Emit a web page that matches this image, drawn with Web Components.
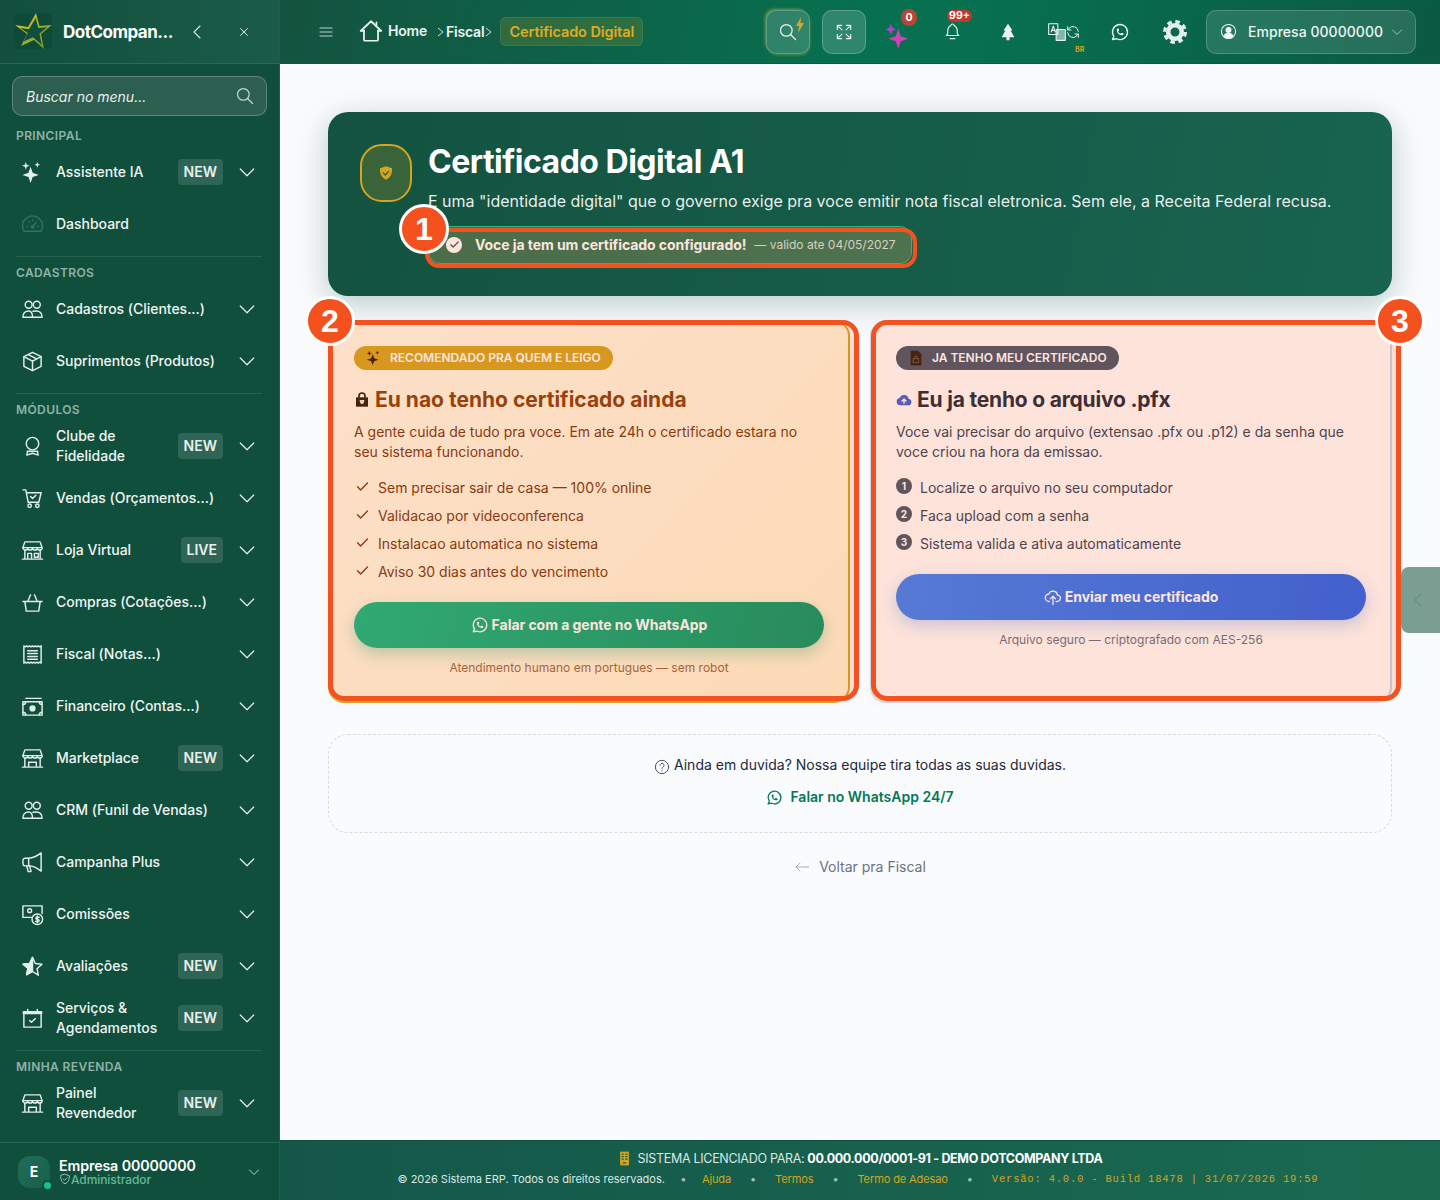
<!DOCTYPE html>
<html lang="pt-BR">
<head>
<meta charset="utf-8">
<title>Certificado Digital</title>
<style>
  html, body { margin: 0; height: 1200px; overflow: hidden; background: #fafbfd; font-family: Inter, "Liberation Sans", sans-serif; }
</style>
</head>
<body>
<dc-app>
  <dc-sidebar slot="sidebar"></dc-sidebar>
  <dc-topbar slot="topbar"></dc-topbar>
  <dc-hero>
    <span slot="title">Certificado Digital A1</span>
    <span slot="text">E uma "identidade digital" que o governo exige pra voce emitir nota fiscal eletronica. Sem ele, a Receita Federal recusa.</span>
    <span slot="status">Voce ja tem um certificado configurado!</span>
    <span slot="valid">— valido ate 04/05/2027</span>
  </dc-hero>
  <dc-cards>
    <dc-option-card variant="gold" number="2" tagicon="sparkles" titleicon="lockbag" button="Falar com a gente no WhatsApp" btnicon="whatsapp" note="Atendimento humano em portugues — sem robot">
      <span slot="tag">RECOMENDADO PRA QUEM E LEIGO</span>
      <span slot="title">Eu nao tenho certificado ainda</span>
      <span slot="desc">A gente cuida de tudo pra voce. Em ate 24h o certificado estara no seu sistema funcionando.</span>
      <dc-list-row mark="check">Sem precisar sair de casa — 100% online</dc-list-row>
      <dc-list-row mark="check">Validacao por videoconferenca</dc-list-row>
      <dc-list-row mark="check">Instalacao automatica no sistema</dc-list-row>
      <dc-list-row mark="check">Aviso 30 dias antes do vencimento</dc-list-row>
    </dc-option-card>
    <dc-option-card variant="blue" number="3" tagicon="filelock" titleicon="cloudfill" button="Enviar meu certificado" btnicon="cloudup" note="Arquivo seguro — criptografado com AES-256">
      <span slot="tag">JA TENHO MEU CERTIFICADO</span>
      <span slot="title">Eu ja tenho o arquivo .pfx</span>
      <span slot="desc">Voce vai precisar do arquivo (extensao .pfx ou .p12) e da senha que voce criou na hora da emissao.</span>
      <dc-list-row mark="1">Localize o arquivo no seu computador</dc-list-row>
      <dc-list-row mark="2">Faca upload com a senha</dc-list-row>
      <dc-list-row mark="3">Sistema valida e ativa automaticamente</dc-list-row>
    </dc-option-card>
  </dc-cards>
  <dc-help></dc-help>
  <dc-footer slot="footer"></dc-footer>
</dc-app>

<script>
// paths are all on a 24x24 box, stroke unless the name is in FILLED
const ICONS = {
  sparkles: '<path d="M10 6l2.200 6.300L18.500 14.500l-6.300 2.200L10 23l-2.200-6.300L1.500 14.500l6.300-2.200z"/><path d="M5 1l1 3 3 1-3 1-1 3-1-3-3-1 3-1z"/><path d="M17 1l.8 2.200L20 4l-2.200.8L17 7l-.8-2.200L14 4l2.200-.8z"/>',
  gauge: '<path d="M3 19a10.500 10.500 0 1 1 18 0z"/><path d="M12 14l4-4M6 14h1M17 14h1M8 9l.7.7M12 7v1"/><circle cx="12" cy="14.500" r="1.200"/>',
  users: '<circle cx="8" cy="7" r="3.600"/><circle cx="16.500" cy="7" r="3.600"/><path d="M2 20c0-4 2.500-6.500 6-6.500S12 16 12 20zM12.500 13.800c.9-.3 2.400-.3 3.500-.3 3.500 0 6 2.500 6 6.500H12"/>',
  box: '<path d="M12 2.500l9 4.500v10l-9 4.500-9-4.500V7z"/><path d="M3 7l9 4.500L21 7M12 11.500v10M7.500 4.800l9 4.500"/>',
  award: '<circle cx="12" cy="9" r="6.500"/><path d="M6.500 17h11M7 17l-1 4 6-2 6 2-1-4"/>',
  cart: '<path d="M2 3h3l2.500 13h11L21 6H5.500"/><circle cx="9" cy="19.500" r="1.800"/><circle cx="17" cy="19.500" r="1.800"/><path d="M10 10l2 2 3.500-3.500"/>',
  store: '<path d="M4 3h16l2 6H2z"/><path d="M2 9a2.500 2.500 0 0 0 5 0 2.500 2.500 0 0 0 5 0 2.500 2.500 0 0 0 5 0 2.500 2.500 0 0 0 5 0"/><path d="M4 12v9h16v-9M1.500 21h21M7 15h4v6H7zM14 15h4v4h-4z"/>',
  market: '<path d="M4 3h16l2 6H2z"/><path d="M2 9a2.500 2.500 0 0 0 5 0 2.500 2.500 0 0 0 5 0 2.500 2.500 0 0 0 5 0 2.500 2.500 0 0 0 5 0"/><path d="M4 12v9h16v-9M1.500 21h21M8 16h8v5H8z"/>',
  basket: '<path d="M2 11h20M4 11l1.500 10h13L20 11M7 11l3-7M17 11l-3-7"/>',
  receipt: '<path d="M3 3l1.500 1L6 3l1.500 1L9 3l1.500 1L12 3l1.500 1L15 3l1.500 1L18 3l1.500 1L21 3v18l-1.500-1-1.500 1-1.500-1-1.500 1-1.500-1-1.500 1-1.500-1L9 21l-1.500-1L6 21l-1.500-1L3 21z"/><path d="M7 8h10M7 11h10M7 14h10M7 17h10"/>',
  cash: '<path d="M5 3.500h16M2 7h20v14H2z"/><circle cx="12" cy="14" r="2.500" fill="currentColor"/><path d="M2 10c2 0 3-1 3-3M22 10c-2 0-3-1-3-3M2 18c2 0 3 1 3 3M22 18c-2 0-3 1-3 3"/>',
  megaphone: '<path d="M21 2v19c-5-4-9-5.500-13-5.500H4a2.500 2.500 0 0 1-2-2.500V10a2.500 2.500 0 0 1 2-2.500h4C12 7.500 16 6 21 2z"/><path d="M8 7.500v8M6 15.500l1.500 6h3l-1.500-6"/>',
  commission: '<path d="M2 3h20v8M11 15H2V3"/><circle cx="9" cy="8" r="2"/><circle cx="17" cy="17" r="5.500"/><path d="M19 15.200c-.5-.6-3.500-1-3.500.7s3.500 1 3.500 2.500-3 1.300-3.700.6M17 13.500v7"/>',
  star: '<path d="M12 2.500l2.900 6.300 6.900.8-5.100 4.700 1.400 6.800L12 17.200l-6.100 3.400 1.400-6.800L2.200 9.600l6.900-.8z"/><path d="M12 2.500v14.700l-6.100 3.400 1.400-6.800L2.200 9.600l6.900-.8z" fill="currentColor"/>',
  calendar: '<path d="M3 5h18v16H3zM7 2.500V6M17 2.500V6"/><path d="M3 6h18" stroke-width="3"/><path d="M9 14l2 2 4-4"/>',
  menu: '<path d="M3 6h18M3 12h18M3 18h18"/>',
  home: '<path d="M5.500 12H2.500L12 3l9.500 9h-3"/><path d="M5.500 11.500V20a1 1 0 0 0 1 1h11a1 1 0 0 0 1-1v-8.500M17 4v3"/>',
  search: '<circle cx="10" cy="10" r="7"/><path d="M21 21l-6-6"/>',
  expand: '<path d="M4 9V4h5M4 4l5.500 5.500M20 9V4h-5M20 4l-5.500 5.500M4 15v5h5M4 20l5.500-5.500M20 15v5h-5M20 20l-5.500-5.500"/>',
  bell: '<path d="M10 4.500a2 2 0 1 1 4 0 7 7 0 0 1 4 6v3.500a4 4 0 0 0 2 3H4a4 4 0 0 0 2-3v-3.500a7 7 0 0 1 4-6z"/><path d="M9 21h6"/>',
  tree: '<path d="M12 1l6 9h-2.500l5 9H14v4h-4v-4H3.500l5-9H6z"/>',
  translate: '<path d="M2 2h11v13H2z"/><path d="M5 12l2.500-7 2.500 7M6 10h3" stroke-width="1.300"/><path d="M11 9h11v13H11z" fill="currentColor" fill-opacity=".55"/>',
  refresh: '<path d="M20 11a8 8 0 0 0-14-4.500L4 9M4 4v5h5M4 13a8 8 0 0 0 14 4.500l2-2.500M20 20v-5h-5"/>',
  whatsapp: '<path d="M3 21l1.650-3.800a9 9 0 1 1 3.400 2.900L3 21"/><path d="M9 10a.5.5 0 0 0 1 0V9a.5.5 0 0 0-1 0v1a5 5 0 0 0 5 5h1a.5.5 0 0 0 0-1h-1a.5.5 0 0 0 0 1"/>',
  usercircle: '<circle cx="12" cy="12" r="10"/><circle cx="12" cy="10" r="3.500" fill="currentColor"/><path d="M5.500 19c1-3.500 3-4.500 6.500-4.500s5.500 1 6.500 4.500a10 10 0 0 1-13 0z" fill="currentColor"/>',
  chevdown: '<path d="M3 8l9 9 9-9"/>',
  chevleft: '<path d="M15 3l-9 9 9 9"/>',
  close: '<path d="M6 6l12 12M18 6L6 18"/>',
  check: '<path d="M4 12.500l5 5L20 6.500"/>',
  question: '<circle cx="12" cy="12" r="10"/><path d="M9 9.500a3 3 0 1 1 4.500 2.600c-1 .6-1.500 1.200-1.500 2.400M12 17.500v.5"/>',
  arrowleft: '<path d="M22 12H3M9 6l-6 6 6 6"/>',
  cloudup: '<path d="M7 18a5 5 0 0 1-.5-10 6 6 0 0 1 11.500 1.500 4.200 4.200 0 0 1-1 8.500h-1"/><path d="M12 22V11M8.500 14.500L12 11l3.500 3.500"/>',
  shieldline: '<path d="M12 2.500l8.500 3c.5 7-1.500 13-8.500 16-7-3-9-9-8.500-16z"/><path d="M8.500 12l2.500 2.500 4.500-4.500"/>',
  building: '<path d="M5 1h14v22H5z" fill="currentColor" stroke="none"/><path d="M8 5h2M14 5h2M8 9h2M14 9h2M8 13h2M14 13h2M10 19h4" stroke="#16604c" stroke-width="2"/>',
  lockbag: '<path d="M3 8h18v14H3z" fill="currentColor" stroke="none"/><path d="M7.500 8V6a4.500 4.500 0 0 1 9 0v2" stroke-width="2.500"/><path d="M8.500 12h7c0 4-1.500 5.500-3.500 6.500-2-1-3.500-2.500-3.500-6.500z" fill="#fde4c8" stroke="none"/>',
  cloudfill: '<path d="M6.500 20a5.500 5.500 0 0 1-1-10.900 7 7 0 0 1 13.400 1 5 5 0 0 1-.4 9.900z" fill="currentColor" stroke="none"/><path d="M12 17v-6M9 13.500l3-3 3 3" stroke="#fff" stroke-width="2"/>',
  filelock: '<path d="M4 1h11l5 5v17H4z" fill="currentColor" stroke="none"/><path d="M8 13h8v6H8zM10 13v-2a2 2 0 0 1 4 0v2" stroke="#6d5d63" stroke-width="1.300" fill="none"/>',
  shieldfill: '<path d="M12 2l9 3c.5 8-2 14-9 17-7-3-9.500-9-9-17z" fill="currentColor" stroke="none"/><path d="M8 12l3 3 5-5.500" stroke="#2d5c3e" stroke-width="1.800"/>'
};
const FILLED = new Set(['sparkles', 'tree']);

class DcIcon extends HTMLElement {
  connectedCallback() {
    const name = this.getAttribute('name');
    const size = this.getAttribute('size') || 20;
    const weight = this.getAttribute('weight') || 1.5;
    const paint = FILLED.has(name) ? 'fill="currentColor" stroke="none"' : `fill="none" stroke="currentColor" stroke-width="${weight}" stroke-linecap="round" stroke-linejoin="round"`;
    this.attachShadow({ mode: 'open' }).innerHTML = `
      <style>:host { display: inline-flex; flex: none; } svg { display: block; }</style>
      <svg width="${size}" height="${size}" viewBox="0 0 24 24" ${paint}>${ICONS[name] || ''}</svg>`;
  }
}
customElements.define('dc-icon', DcIcon);

class DcApp extends HTMLElement {
  constructor() {
    super();
    this.attachShadow({ mode: 'open' }).innerHTML = `
      <style>
        :host { display: grid; grid-template-columns: 280px 1fr; height: 1200px; position: relative; overflow: hidden; }
        .side { grid-row: 1 / 3; min-width: 0; }
        .col { display: flex; flex-direction: column; height: 1200px; min-width: 0; }
        main { flex: 1; padding: 48px 48px 0; min-height: 0; }
        .handle { position: absolute; right: 0; top: 567px; width: 39px; height: 66px; background: #7a9e92; border-radius: 8px 0 0 8px; color: #64877c; display: flex; align-items: center; padding-left: 10px; box-sizing: border-box; }
      </style>
      <div class="side"><slot name="sidebar"></slot></div>
      <div class="col">
        <slot name="topbar"></slot>
        <main><slot></slot></main>
        <slot name="footer"></slot>
      </div>
      <div class="handle"><dc-icon name="chevleft" size="16"></dc-icon></div>`;
  }
}
customElements.define('dc-app', DcApp);

class DcNavItem extends HTMLElement {
  constructor() {
    super();
    this.attachShadow({ mode: 'open' });
  }
  connectedCallback() {
    const icon = this.getAttribute('icon');
    const badge = this.getAttribute('badge');
    const noChev = this.hasAttribute('nochevron');
    const dim = this.hasAttribute('dim');
    this.shadowRoot.innerHTML = `
      <style>
        :host { display: flex; align-items: center; height: 52px; padding: 0 22px 0 21px; color: #eef5f2; font-size: 14px; font-weight: 550; line-height: 20px; letter-spacing: -.02px; }
        .ic { width: 35px; flex: none; display: flex; color: ${dim ? '#2a7560' : '#e4eeea'}; }
        .lb { flex: 1; min-width: 0; }
        .badge { background: rgba(255,255,255,.13); border-radius: 4px; height: 26px; line-height: 26px; padding: 0 6px; font-size: 14px; font-weight: 600; color: #e8f0ed; letter-spacing: 0; }
        .chev { margin-left: 15px; width: 18px; margin-right: 1px; color: #e4eeea; display: flex; }
      </style>
      <span class="ic"><dc-icon name="${icon}" size="23" weight="1.500"></dc-icon></span>
      <span class="lb"><slot></slot></span>
      ${badge ? `<span class="badge">${badge}</span>` : ''}
      ${noChev ? '' : '<span class="chev"><dc-icon name="chevdown" size="18" weight="1.600"></dc-icon></span>'}`;
  }
}
customElements.define('dc-nav-item', DcNavItem);

class DcNavSection extends HTMLElement {
  constructor() {
    super();
    this.attachShadow({ mode: 'open' }).innerHTML = `
      <style>
        :host { display: block; padding-top: 8px; margin-top: 6px; position: relative; }
        :host([first]) { padding-top: 11px; margin-top: 0; }
        :host(:not([first]))::before { content: ""; position: absolute; left: 16px; right: 17px; top: 0; height: 1px; background: rgba(255,255,255,.1); }
        h3 { margin: 0 0 1px; padding: 0 16px; height: 18px; line-height: 18px; font-size: 12px; font-weight: 600; letter-spacing: .4px; color: #8fb3a7; }
      </style>
      <h3></h3>
      <slot></slot>`;
  }
  connectedCallback() {
    this.shadowRoot.querySelector('h3').textContent = this.getAttribute('label');
  }
}
customElements.define('dc-nav-section', DcNavSection);

class DcSidebar extends HTMLElement {
  constructor() {
    super();
    this.attachShadow({ mode: 'open' }).innerHTML = `
      <style>
        :host { display: flex; flex-direction: column; height: 1200px; background: #114f3d; box-sizing: border-box; border-right: 1px solid #1f5e4c; color: #fff; overflow: hidden; }
        .head { height: 64px; flex: none; box-sizing: border-box; display: flex; align-items: center; padding-left: 12px; border-bottom: 1px solid #2a6a56; background: linear-gradient(90deg, #124f3e, #1a5c47); }
        .logo { width: 42px; height: 42px; flex: none; }
        .brand { margin-left: 9px; width: 117px; font-size: 17px; font-weight: 700; letter-spacing: -.5px; white-space: nowrap; }
        .head .ctl { color: #dfe9e5; display: flex; }
        .head .back { margin-left: 10px; }
        .head .x { margin-left: 31px; }
        .search { margin: 12px 12px 0; height: 40px; flex: none; box-sizing: border-box; border: 1px solid rgba(255,255,255,.25); border-radius: 10px; background: #2d5f50; display: flex; align-items: center; padding: 0 11px 0 13px; font-size: 14px; font-style: italic; color: #e8f0ed; justify-content: space-between; }
        .search dc-icon { color: #c3d4ce; }
        nav { flex: 1; min-height: 0; }
        .user { height: 58px; flex: none; display: flex; align-items: center; border-top: 1px solid #2b6553; padding: 0 18px; box-sizing: border-box; position: relative; }
        .avatar { width: 32px; height: 32px; border-radius: 12px; background: linear-gradient(135deg, #206d55, #17604a); display: flex; align-items: center; justify-content: center; font-weight: 700; font-size: 14px; flex: none; position: relative; }
        .avatar::after { content: ""; position: absolute; right: -1px; bottom: -1px; width: 7px; height: 7px; border-radius: 50%; background: #17c088; box-shadow: 0 0 0 2px #114f3d; }
        .who { margin-left: 9px; flex: 1; }
        .name { font-size: 14.2px; font-weight: 600; line-height: 15px; letter-spacing: -.1px; }
        .role { display: flex; align-items: center; font-size: 12px; line-height: 13px; font-weight: 500; color: #62bb96; letter-spacing: -.08px; }
        .role dc-icon { color: #a6cfc0; }
        .user .down { color: #cfe0da; display: flex; margin-right: 1px; }
      </style>
      <div class="head">
        <svg class="logo" viewBox="0 0 42 42">
          <defs><linearGradient id="g" x1="0" y1="0" x2="1" y2="1"><stop offset="0" stop-color="#e8c52a"/><stop offset="1" stop-color="#5f9a2a"/></linearGradient></defs>
          <rect x="2" y="2" width="38" height="36" rx="5" fill="#0f4a39"/>
          <path d="M24 2l3.500 13L40 14 29 23l3 15-10-9-13 6 6-12L3 14l13 2z" fill="url(#g)"/>
          <path d="M23.800 7l2.400 10 9-.7-7.800 6.500 2.300 11-8.700-7.600-9.500 4.400 4.300-8.700-7.800-5 9 1.300z" fill="#114f3d"/>
        </svg>
        <span class="brand">DotCompan...</span>
        <span class="ctl back"><dc-icon name="chevleft" size="16" weight="1.600"></dc-icon></span>
        <span class="ctl x"><dc-icon name="close" size="14" weight="1.700"></dc-icon></span>
      </div>
      <div class="search"><span>Buscar no menu...</span><dc-icon name="search" size="20" weight="1.500"></dc-icon></div>
      <nav>
        <dc-nav-section first label="PRINCIPAL">
          <dc-nav-item icon="sparkles" badge="NEW">Assistente IA</dc-nav-item>
          <dc-nav-item icon="gauge" nochevron dim>Dashboard</dc-nav-item>
        </dc-nav-section>
        <dc-nav-section label="CADASTROS">
          <dc-nav-item icon="users">Cadastros (Clientes...)</dc-nav-item>
          <dc-nav-item icon="box">Suprimentos (Produtos)</dc-nav-item>
        </dc-nav-section>
        <dc-nav-section label="MÓDULOS">
          <dc-nav-item icon="award" badge="NEW">Clube de Fidelidade</dc-nav-item>
          <dc-nav-item icon="cart">Vendas (Orçamentos...)</dc-nav-item>
          <dc-nav-item icon="store" badge="LIVE">Loja Virtual</dc-nav-item>
          <dc-nav-item icon="basket">Compras (Cotações...)</dc-nav-item>
          <dc-nav-item icon="receipt">Fiscal (Notas...)</dc-nav-item>
          <dc-nav-item icon="cash">Financeiro (Contas...)</dc-nav-item>
          <dc-nav-item icon="market" badge="NEW">Marketplace</dc-nav-item>
          <dc-nav-item icon="users">CRM (Funil de Vendas)</dc-nav-item>
          <dc-nav-item icon="megaphone">Campanha Plus</dc-nav-item>
          <dc-nav-item icon="commission">Comissões</dc-nav-item>
          <dc-nav-item icon="star" badge="NEW">Avaliações</dc-nav-item>
          <dc-nav-item icon="calendar" badge="NEW">Serviços &amp; Agendamentos</dc-nav-item>
        </dc-nav-section>
        <dc-nav-section label="MINHA REVENDA">
          <dc-nav-item icon="market" badge="NEW">Painel Revendedor</dc-nav-item>
        </dc-nav-section>
      </nav>
      <div class="user">
        <div class="avatar">E</div>
        <div class="who">
          <div class="name">Empresa 00000000</div>
          <div class="role"><dc-icon name="shieldline" size="12" weight="1.800"></dc-icon>Administrador</div>
        </div>
        <span class="down"><dc-icon name="chevdown" size="12" weight="1.800"></dc-icon></span>
      </div>`;
  }
}
customElements.define('dc-sidebar', DcSidebar);

class DcTopbar extends HTMLElement {
  constructor() {
    super();
    this.attachShadow({ mode: 'open' }).innerHTML = `
      <style>
        :host { display: flex; align-items: center; height: 64px; flex: none; box-sizing: border-box; padding: 0 24px 0 38px; color: #fff; background: linear-gradient(100deg, #14533f 0%, #07704f 50%, #077050 60%, #0b5a43 100%); border-bottom: 1px solid #0d5a45; font-size: 14px; }
        .burger { color: rgba(255,255,255,.72); display: flex; }
        .crumbs { display: flex; align-items: center; margin-left: 24px; font-weight: 600; letter-spacing: -.2px; color: #ecf4f1; }
        .crumbs .home { margin-top: 2px; }
        .crumbs .h { margin: -3px 0 0 4px; }
        .sep { color: #d5e4de; display: flex; }
        .sep.a { margin-left: 9px; }
        .here { margin-left: 6px; height: 29px; box-sizing: border-box; padding: 0 8px; display: flex; align-items: center; border: 1px solid rgba(255,255,255,.08); border-radius: 6px; background: rgba(212,165,32,.17); color: #e0ab1e; font-size: 14.5px; letter-spacing: -.1px; }
        .tools { margin-left: auto; display: flex; align-items: center; gap: 12px; }
        .btn { width: 44px; height: 44px; box-sizing: border-box; border-radius: 10px; border: 1px solid rgba(255,255,255,.22); background: rgba(255,255,255,.16); display: flex; align-items: center; justify-content: center; position: relative; color: #e8f1ee; }
        .btn.glow { box-shadow: -2px -2px 3px -1px rgba(212,190,60,.55), 1px 2px 3px -1px rgba(212,190,60,.4); }
        .bolt { position: absolute; right: 4px; top: 6px; width: 10px; height: 16px; }
        .slot { width: 44px; height: 44px; display: flex; align-items: center; justify-content: center; position: relative; color: #eaf3ef; }
        .first { margin-left: -4px; }
        .count { position: absolute; background: #c0392f; color: #fff; font-size: 10.5px; font-weight: 700; border-radius: 9px; display: flex; align-items: center; justify-content: center; }
        .br { position: absolute; left: 33px; top: 35px; font-size: 7px; font-weight: 700; color: #cfa51c; }
        .company { margin-left: -4px; width: 210px; height: 44px; box-sizing: border-box; border: 1px solid rgba(255,255,255,.2); border-radius: 10px; background: rgba(255,255,255,.12); display: flex; align-items: center; padding: 0 12px 0 13px; font-size: 14px; font-weight: 500; letter-spacing: .04px; color: #eef5f2; }
        .company .nm { margin-left: 11px; flex: 1; white-space: nowrap; }
        .company dc-icon:last-child { color: #bcd0c9; }
      </style>
      <span class="burger"><dc-icon name="menu" size="16" weight="1.500"></dc-icon></span>
      <div class="crumbs">
        <span class="home"><dc-icon name="home" size="26" weight="1.600"></dc-icon></span><span class="h">Home</span>
        <span class="sep a"><svg width="10" height="10" viewBox="0 0 10 10" fill="none" stroke="currentColor" stroke-width="1"><path d="M2 1l5 4-5 4"/></svg></span><span>Fiscal</span>
        <span class="sep"><svg width="10" height="10" viewBox="0 0 10 10" fill="none" stroke="currentColor" stroke-width="1"><path d="M2 1l5 4-5 4"/></svg></span>
        <span class="here">Certificado Digital</span>
      </div>
      <div class="tools">
        <div class="btn glow"><dc-icon name="search" size="20" weight="1.500"></dc-icon>
          <svg class="bolt" viewBox="0 0 10 16"><path d="M6 0L1 9h3l-1 7 6-10H5.500z" fill="#d8a72a"/></svg></div>
        <div class="btn"><dc-icon name="expand" size="20" weight="1.400"></dc-icon></div>
        <div class="slot first">
          <svg width="28" height="30" viewBox="0 0 22 24" style="margin:6px 0 0 2px"><path d="M12 7l2 6 6 2-6 2-2 6-2-6-6-2 6-2z" fill="#d43fb8"/><path d="M6 3l1.300 3.200L10 7.500 7.300 8.800 6 12 4.700 8.800 2 7.500l2.700-1.300z" fill="#b43fd6"/></svg>
          <span class="count" style="left:27px;top:-1px;width:16px;height:17px;background:#b8443a">0</span>
        </div>
        <div class="slot"><dc-icon name="bell" size="19" weight="1.400"></dc-icon>
          <span class="count" style="left:17px;top:0;width:25px;height:12px;border-radius:6px">99+</span></div>
        <div class="slot"><dc-icon name="tree" size="18"></dc-icon></div>
        <div class="slot"><dc-icon name="translate" size="20" weight="1.300"></dc-icon><dc-icon name="refresh" size="16" weight="1.500" style="margin-left:-2px"></dc-icon><span class="br">BR</span></div>
        <div class="slot"><dc-icon name="whatsapp" size="20" weight="1.600"></dc-icon></div>
        <div class="slot" style="padding-right:3px;box-sizing:border-box">
          <svg width="26" height="26" viewBox="0 0 26 26" fill="none" stroke="#e4efeb"><circle cx="13" cy="13" r="6.800" stroke-width="4.600"/><circle cx="13" cy="13" r="10.300" stroke-width="3.400" stroke-dasharray="4.500 3.590"/></svg>
        </div>
        <div class="company"><dc-icon name="usercircle" size="17" weight="1.500"></dc-icon><span class="nm">Empresa 00000000</span><dc-icon name="chevdown" size="12" weight="1.600"></dc-icon></div>
      </div>`;
  }
}
customElements.define('dc-topbar', DcTopbar);

// orange highlight box with a numbered dot, sits over whatever its parent holds
class DcCallout extends HTMLElement {
  connectedCallback() {
    const n = this.getAttribute('number');
    this.attachShadow({ mode: 'open' }).innerHTML = `
      <style>
        :host { position: absolute; display: block; box-sizing: border-box; pointer-events: none; border: var(--w, 5px) solid #f4511e; border-radius: var(--r, 16px); background: rgba(244,81,30,.15); z-index: 2; }
        .dot { position: absolute; width: 44px; height: 44px; left: var(--dx); top: var(--dy); border-radius: 50%; background: #f4511e; border: 3px solid #fff; color: #fff; font: 700 32px/44px "Liberation Sans", sans-serif; text-align: center; }
      </style>
      <div class="dot">${n}</div>`;
  }
}
customElements.define('dc-callout', DcCallout);

class DcHero extends HTMLElement {
  constructor() {
    super();
    this.attachShadow({ mode: 'open' }).innerHTML = `
      <style>
        :host { display: flex; height: 184px; box-sizing: border-box; padding: 32px; border-radius: 20px; color: #fff; background: linear-gradient(100deg, #135340 0%, #186450 100%); box-shadow: 0 8px 32px rgba(15,80,62,.28); position: relative; }
        .seal { width: 52px; height: 58px; box-sizing: border-box; flex: none; border: 2px solid #d4a520; border-radius: 22px; background: rgba(212,165,32,.2); display: flex; align-items: center; justify-content: center; color: #d4a520; }
        .body { margin-left: 16px; min-width: 0; position: relative; flex: 1; }
        h1 { margin: 0; padding-top: 1px; height: 34px; box-sizing: border-box; font-size: 32px; line-height: 34px; font-weight: 700; letter-spacing: -.5px; }
        p { margin: 11px 0 13px; font-size: 16px; line-height: 24px; color: rgba(255,255,255,.92); letter-spacing: 0; white-space: nowrap; }
        .pill { display: inline-flex; width: 484px; height: 38px; box-sizing: border-box; align-items: center; padding: 0 0 1px 17px; border: 1px solid #34b586; border-radius: 12px; background: rgba(120,195,125,.28); }
        .tick { width: 16px; height: 16px; border-radius: 50%; background: #fff; color: #2a5c45; display: flex; align-items: center; justify-content: center; }
        .st { margin-left: 13px; font-size: 14px; font-weight: 700; letter-spacing: -.07px; }
        .va { margin-left: 8px; font-size: 12px; color: rgba(255,255,255,.82); }
        dc-callout { left: -3px; top: 84px; width: 492px; height: 40px; --w: 4px; --r: 14px; --dx: -30px; --dy: -28px; }
      </style>
      <div class="seal"><dc-icon name="shieldfill" size="16"></dc-icon></div>
      <div class="body">
        <h1><slot name="title"></slot></h1>
        <p><slot name="text"></slot></p>
        <div class="pill"><span class="tick"><dc-icon name="check" size="11" weight="2.500"></dc-icon></span><span class="st"><slot name="status"></slot></span><span class="va"><slot name="valid"></slot></span></div>
        <dc-callout number="1"></dc-callout>
      </div>`;
  }
}
customElements.define('dc-hero', DcHero);

class DcCards extends HTMLElement {
  constructor() {
    super();
    this.attachShadow({ mode: 'open' }).innerHTML = `
      <style>:host { display: grid; grid-template-columns: 522px 522px; gap: 20px; margin-top: 24px; height: 380px; }</style>
      <slot></slot>`;
  }
}
customElements.define('dc-cards', DcCards);

class DcListRow extends HTMLElement {
  connectedCallback() {
    const mark = this.getAttribute('mark');
    const content = mark === 'check'
      ? '<span class="c"><dc-icon name="check" size="15" weight="2.200"></dc-icon></span>'
      : `<span class="n">${mark}</span>`;
    this.attachShadow({ mode: 'open' }).innerHTML = `
      <style>
        :host { display: flex; align-items: center; height: 28px; box-sizing: border-box; padding-bottom: 1px; font-size: 14px; letter-spacing: 0; }
        .c { width: 24px; flex: none; margin-top: -3px; padding-left: 1px; box-sizing: border-box; display: flex; }
        .n { width: 16px; height: 16px; margin: -3px 8px 0 0; border-radius: 50%; background: #475569; color: #fff; font-size: 10px; font-weight: 700; line-height: 16px; text-align: center; flex: none; }
      </style>
      ${content}<span><slot></slot></span>`;
  }
}
customElements.define('dc-list-row', DcListRow);

class DcOptionCard extends HTMLElement {
  connectedCallback() {
    const gold = this.getAttribute('variant') === 'gold';
    const attr = n => this.getAttribute(n);
    this.attachShadow({ mode: 'open' }).innerHTML = `
      <style>
        :host { display: block; position: relative; box-sizing: border-box; padding: 24px; border: 2px solid ${gold ? '#d4a520' : '#cbd5e1'}; border-radius: 16px; background: ${gold ? 'linear-gradient(135deg, #fff9e8, #fef3d2)' : '#fffdfc'}; color: ${gold ? '#78350f' : '#334155'}; box-shadow: 0 2px 8px rgba(15,40,60,.04); }
        .tag { display: inline-flex; align-items: center; height: 24px; box-sizing: border-box; padding: 0 12px 1px; border-radius: 12px; background: ${gold ? '#d4a520' : '#475569'}; color: #fff; font-size: 12px; font-weight: 600; letter-spacing: -.01px; vertical-align: top; }
        .tag dc-icon { color: #2a1a0a; margin-right: 8px; }
        h2 { display: flex; align-items: center; gap: 5px; margin: 16px 0 8px; height: 28px; font-size: 21px; line-height: 28px; font-weight: 700; letter-spacing: ${gold ? '0' : '-.2px'}; color: ${gold ? '#8a3f0a' : '#1e293b'}; white-space: nowrap; }
        h2 dc-icon { color: ${gold ? '#2a1a12' : '#3f5fd0'}; }
        .desc { margin: 0 0 12px; font-size: 14px; line-height: 20px; letter-spacing: 0; }
        .cta { margin-top: 16px; height: 46px; box-sizing: border-box; padding-bottom: 1px; border-radius: 23px; display: flex; align-items: center; justify-content: center; gap: 3px; color: #fff; font-size: 14px; font-weight: 650; letter-spacing: -.04px; background: ${gold ? 'linear-gradient(100deg, #10b981, #059669)' : 'linear-gradient(100deg, #3b82f6, #2563eb)'}; box-shadow: 0 6px 16px ${gold ? 'rgba(5,150,105,.3)' : 'rgba(37,99,235,.25)'}; }
        .note { margin-top: 11px; line-height: 18px; text-align: center; font-size: 12px; opacity: .75; }
        dc-callout { top: -2px; left: ${gold ? '-2px' : '-1px'}; width: ${gold ? '531px' : '530px'}; height: 381px; --dx: ${gold ? '-28px' : '499px'}; --dy: -29px; }
      </style>
      <div class="tag"><dc-icon name="${attr('tagicon')}" size="16"></dc-icon><slot name="tag"></slot></div>
      <h2><dc-icon name="${attr('titleicon')}" size="16"></dc-icon><slot name="title"></slot></h2>
      <p class="desc"><slot name="desc"></slot></p>
      <slot></slot>
      <div class="cta"><dc-icon name="${attr('btnicon')}" size="18" weight="1.700"></dc-icon>${attr('button')}</div>
      <div class="note">${attr('note')}</div>
      <dc-callout number="${attr('number')}"></dc-callout>`;
  }
}
customElements.define('dc-option-card', DcOptionCard);

class DcHelp extends HTMLElement {
  constructor() {
    super();
    this.attachShadow({ mode: 'open' }).innerHTML = `
      <style>
        :host { display: block; margin-top: 34px; }
        .box { height: 99px; box-sizing: border-box; border: 1px dashed #d5dae5; border-radius: 20px; display: flex; flex-direction: column; align-items: center; padding-top: 20px; }
        .q { display: flex; align-items: center; gap: 4px; font-size: 14px; line-height: 20px; color: #1e293b; letter-spacing: 0; }
        .q dc-icon { color: #475569; margin-top: 3px; }
        .wa { display: flex; align-items: center; gap: 7px; margin-top: 12px; font-size: 14px; line-height: 20px; font-weight: 600; color: #047857; }
        .back { display: flex; justify-content: center; align-items: center; gap: 9px; margin-top: 24px; line-height: 20px; font-size: 14px; color: #6b7280; }
        .back dc-icon { color: #9ca3af; }
      </style>
      <div class="box">
        <div class="q"><dc-icon name="question" size="16" weight="1.500"></dc-icon>Ainda em duvida? Nossa equipe tira todas as suas duvidas.</div>
        <div class="wa"><dc-icon name="whatsapp" size="17" weight="1.800"></dc-icon>Falar no WhatsApp 24/7</div>
      </div>
      <div class="back"><dc-icon name="arrowleft" size="16" weight="1.300"></dc-icon>Voltar pra Fiscal</div>`;
  }
}
customElements.define('dc-help', DcHelp);

class DcFooter extends HTMLElement {
  constructor() {
    super();
    this.attachShadow({ mode: 'open' }).innerHTML = `
      <style>
        :host { display: flex; flex-direction: column; align-items: center; flex: none; height: 60px; box-sizing: border-box; border-top: 1px solid #12503f; padding-top: 9px; color: #dbe8e3; background: linear-gradient(90deg, #14574a, #1a6a50); }
        .lic { display: flex; align-items: center; font-size: 12.5px; line-height: 17px; letter-spacing: -.3px; }
        .lic dc-icon { color: #d4a520; margin-right: 5px; }
        .lic b { color: #fff; font-weight: 700; margin-left: 3px; letter-spacing: -.33px; }
        .meta { display: flex; align-items: center; margin-top: 4px; padding-right: 4px; font-size: 11px; line-height: 16px; letter-spacing: -.01px; white-space: nowrap; }
        .meta i { font-style: normal; color: #9fc0b4; width: 44px; text-align: center; flex: none; }
        .meta i:first-of-type { width: 37px; }
        .meta span { color: #d4a520; letter-spacing: -.1px; }
        .meta em { font: 10.5px/16px "Liberation Mono", monospace; letter-spacing: .8px; color: #d4a520; }
      </style>
      <div class="lic"><dc-icon name="building" size="15"></dc-icon>SISTEMA LICENCIADO PARA: <b>00.000.000/0001-91 - DEMO DOTCOMPANY LTDA</b></div>
      <div class="meta">© 2026 Sistema ERP. Todos os direitos reservados.<i>•</i><span>Ajuda</span><i>•</i><span>Termos</span><i>•</i><span>Termo de Adesao</span><i>•</i><em>Versão: 4.0.0 - Build 18478 | 31/07/2026 19:59</em></div>`;
  }
}
customElements.define('dc-footer', DcFooter);
</script>
</body>
</html>
